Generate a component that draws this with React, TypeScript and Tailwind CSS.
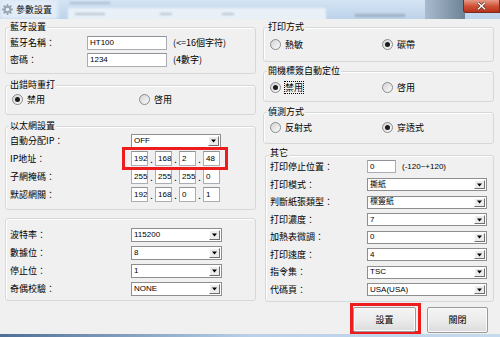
import React from "react";

const CJK = "font-['Noto_Sans_CJK_TC','Noto_Sans_CJK_SC',sans-serif]";
const LAT = "font-['Liberation_Sans','Noto_Sans_CJK_TC',sans-serif]";

function GroupBox({ title, className = "", titleTop = "-top-[6px]", children }: { title?: string; className?: string; titleTop?: string; children?: React.ReactNode }) {
  return (
    <div className={`relative rounded-[3px] border border-[#d5d8db] shadow-[inset_1px_1px_0_#fff] ${className}`}>
      {title && (
        <span className={`absolute left-[3px] bg-[#f0f0f0] px-[1px] text-[9px] leading-[10px] text-black ${titleTop}`}>
          {title}
        </span>
      )}
      {children}
    </div>
  );
}

function Radio({ label, checked, focus, className = "" }: { label: string; checked?: boolean; focus?: boolean; className?: string }) {
  return (
    <div className={`flex items-center gap-[4px] ${className}`}>
      <span className="flex h-[11px] w-[11px] items-center justify-center rounded-full border border-[#8b8b8b] bg-gradient-to-br from-[#d4d4d4] to-[#fbfbfb]">
        {checked && <span className="h-[5px] w-[5px] rounded-full bg-[#1c1c1c]" />}
      </span>
      <span className={`text-[9px] leading-[11px] ${focus ? "outline outline-1 outline-dotted outline-black" : ""}`}>{label}</span>
    </div>
  );
}

function TextBox({ value, className = "" }: { value: string; className?: string }) {
  return (
    <div className={`flex items-center border border-[#abadb3] border-t-[#8f9399] bg-white pl-[2px] text-[8px] leading-none ${LAT} ${className}`}>
      {value}
    </div>
  );
}

function Combo({ value, className = "" }: { value: string; className?: string }) {
  return (
    <div className={`flex items-stretch border border-[#8e8e8e] bg-white ${className}`}>
      <span className={`flex flex-1 items-center pl-[2px] text-[8px] leading-none ${LAT}`}>{value}</span>
      <span className="m-[1px] flex w-[11px] items-center justify-center border border-t-white border-l-white border-r-[#6f6f6f] border-b-[#6f6f6f] bg-[#ececec]">
        <svg width="5" height="4" viewBox="0 0 5 4">
          <path d="M0 0.5h5L2.5 3.5z" fill="#000" />
        </svg>
      </span>
    </div>
  );
}

function IpBox({ parts }: { parts: string[] }) {
  return (
    <div className="flex items-stretch">
      {parts.map((p, i) => (
        <React.Fragment key={i}>
          {i > 0 && <span className="flex w-[7px] items-end justify-center pb-[2px] text-[9px] leading-[9px]">.</span>}
          <TextBox value={p} className="h-[15px] w-[17px]" />
        </React.Fragment>
      ))}
    </div>
  );
}

function Button({ label, className = "" }: { label: string; className?: string }) {
  return (
    <div className={`flex items-center justify-center rounded-[2px] border border-[#9a9a9a] bg-gradient-to-b from-[#f4f4f4] via-[#ececec] to-[#dcdcdc] text-[9px] shadow-[inset_0_0_0_1px_#fafafa] ${className}`}>
      {label}
    </div>
  );
}

export default function App() {
  return (
    <div className={`h-[337px] w-[500px] overflow-hidden bg-[#f0f0f0] text-black ${CJK}`}>
      {/* title bar */}
      <div className="relative h-[19px] overflow-hidden bg-gradient-to-b from-[#d4e4f4] to-[#bdd3ea]">
        <div className="absolute left-[68px] top-[8px] h-[12px] w-[258px] bg-[#e9f0f7] blur-[1px]" />
        <div className="absolute left-[75px] top-[13px] h-[2px] w-[30px] bg-[#b8c4d0] blur-[1px]" />
        <div className="absolute left-[160px] top-[13px] h-[2px] w-[12px] bg-[#b8c4d0] blur-[1px]" />
        <div className="absolute left-[222px] top-[13px] h-[2px] w-[12px] bg-[#b8c4d0] blur-[1px]" />
        <div className="absolute left-[70px] top-[2px] h-[2px] w-[40px] bg-[#aabbd0] blur-[1px]" />
        <div className="absolute left-[355px] top-[14px] h-[3px] w-[50px] bg-[#9fb0c4] blur-[1px]" />
        <div className="absolute left-[425px] top-0 h-full w-[40px] bg-gradient-to-r from-[#a9bccf] to-[#6e8296]" />
        <div className="absolute left-0 top-0 h-full w-[58px] bg-[#e3edf8] blur-[2px]" />
        <div className="relative flex h-full items-center pl-[2px]">
          <svg width="11" height="11" viewBox="0 0 12 12">
            <g fill="#9aa6b4">
              <circle cx="6" cy="6" r="4.2" />
              <rect x="5" y="0" width="2" height="12" rx="0.6" />
              <rect x="0" y="5" width="12" height="2" rx="0.6" />
              <rect x="5" y="0" width="2" height="12" rx="0.6" transform="rotate(45 6 6)" />
              <rect x="5" y="0" width="2" height="12" rx="0.6" transform="rotate(-45 6 6)" />
            </g>
            <circle cx="6" cy="6" r="2" fill="#e8eef5" />
          </svg>
          <span className="ml-[3px] text-[9px] leading-none text-[#111]">參數設置</span>
        </div>
        <div className="absolute right-0 top-0 flex h-[13px] w-[37px] items-center justify-center rounded-bl-[3px] border border-t-0 border-[#7a2c1e] bg-gradient-to-b from-[#e49a88] via-[#cf5236] to-[#b8301a]">
          <svg width="9" height="8" viewBox="0 0 9 8">
            <path d="M1 0.8L8 7.2M8 0.8L1 7.2" stroke="#4a2a24" strokeWidth="2.6" />
            <path d="M1 0.8L8 7.2M8 0.8L1 7.2" stroke="#fff" strokeWidth="1.5" />
          </svg>
        </div>
      </div>

      {/* client area */}
      <div className="flex h-[315px] gap-[7px] pl-[5px]">
        {/* left column */}
        <div className="flex w-[251px] flex-col pt-[8px]">
          <GroupBox title="藍牙設置" className="h-[47px] pl-[4px] pt-[8px]">
            <div className="flex flex-col gap-[3px]">
              <div className="flex h-[14px] items-center">
                <span className="w-[77px] text-[9px]">藍牙名稱：</span>
                <TextBox value="HT100" className="h-[14px] w-[80px]" />
                <span className="ml-[6px] text-[9px]">(&lt;=16個字符)</span>
              </div>
              <div className="flex h-[14px] items-center">
                <span className="w-[77px] text-[9px]">密碼：</span>
                <TextBox value="1234" className="h-[14px] w-[80px]" />
                <span className="ml-[6px] text-[9px]">(4數字)</span>
              </div>
            </div>
          </GroupBox>

          <GroupBox title="出錯時重打" className="mt-[11px] h-[30px] pl-[6px] pt-[8px]">
            <div className="flex">
              <Radio label="禁用" checked className="w-[127px]" />
              <Radio label="啓用" />
            </div>
          </GroupBox>

          <GroupBox title="以太網設置" className="mt-[11px] h-[84px] pl-[4px] pt-[7px]">
            <div className="flex flex-col gap-[3px]">
              <div className="flex h-[14px] items-center">
                <span className="w-[121px] text-[9px]">自動分配IP：</span>
                <Combo value="OFF" className="h-[14px] w-[90px]" />
              </div>
              <div className="flex items-center">
                <span className="w-[121px] text-[9px]">IP地址：</span>
                <div className="relative">
                  <IpBox parts={["192", "168", "2", "48"]} />
                  <div className="absolute -left-[9px] -top-[4px] h-[23px] w-[106px] border-[3px] border-[#ee1d1d]" />
                </div>
              </div>
              <div className="flex items-center">
                <span className="w-[121px] text-[9px]">子網掩碼：</span>
                <IpBox parts={["255", "255", "255", "0"]} />
              </div>
              <div className="flex items-center">
                <span className="w-[121px] text-[9px]">默認網關：</span>
                <IpBox parts={["192", "168", "0", "1"]} />
              </div>
            </div>
          </GroupBox>

          <GroupBox className="mt-[8px] h-[83px] pl-[4px] pt-[9px]">
            <div className="flex flex-col gap-[4px]">
              {[
                ["波特率：", "115200"],
                ["數據位：", "8"],
                ["停止位：", "1"],
                ["奇偶校驗：", "NONE"],
              ].map(([l, v]) => (
                <div key={l} className="flex h-[14px] items-center">
                  <span className="w-[121px] text-[9px]">{l}</span>
                  <Combo value={v} className="h-[14px] w-[91px]" />
                </div>
              ))}
            </div>
          </GroupBox>
        </div>

        {/* right column */}
        <div className="flex w-[231px] flex-col pt-[8px]">
          <GroupBox title="打印方式" className="h-[35px] pl-[6px] pt-[11px]">
            <div className="flex">
              <Radio label="熱敏" className="w-[112px]" />
              <Radio label="碳帶" checked />
            </div>
          </GroupBox>

          <GroupBox title="開機標簽自動定位" className="mt-[9px] h-[31px] pl-[6px] pt-[10px]">
            <div className="flex">
              <Radio label="禁用" checked focus className="w-[112px]" />
              <Radio label="啓用" />
            </div>
          </GroupBox>

          <GroupBox title="偵測方式" className="mt-[10px] h-[32px] pl-[6px] pt-[9px]">
            <div className="flex">
              <Radio label="反射式" className="w-[112px]" />
              <Radio label="穿透式" checked />
            </div>
          </GroupBox>

          <GroupBox title="其它" titleTop="-top-[8px]" className="ml-[2px] mt-[11px] h-[147px] pl-[4px] pt-[4px]">
            <div className="flex h-[13px] items-center">
              <span className="w-[97px] text-[9px] leading-[10px]">打印停止位置：</span>
              <TextBox value="0" className="h-[13px] w-[29px]" />
              <span className={`ml-[6px] text-[8px] leading-[10px] ${LAT}`}>(-120~+120)</span>
            </div>
            <div className="mt-[5px] flex flex-col gap-[4.5px]">
              {[
                ["打印模式：", "撕紙"],
                ["判斷紙張類型：", "標簽紙"],
                ["打印濃度：", "7"],
                ["加熱表微調：", "0"],
                ["打印速度：", "4"],
                ["指令集：", "TSC"],
                ["代碼頁：", "USA(USA)"],
              ].map(([l, v]) => (
                <div key={l} className="flex h-[13px] items-center">
                  <span className="w-[97px] text-[9px]">{l}</span>
                  <Combo value={v} className="h-[13px] w-[120px]" />
                </div>
              ))}
            </div>
          </GroupBox>

          <div className="mt-[1px] flex items-start justify-end gap-[6px] pr-[6px]">
            <div className="h-[31px] w-[71px] border-[3px] border-[#ee1d1d] pt-[1px]">
              <Button label="設置" className="h-[25px] w-[63px]" />
            </div>
            <Button label="關閉" className="mt-[4px] h-[26px] w-[61px]" />
          </div>
        </div>
      </div>

      {/* bottom frame */}
      <div className="h-[3px] bg-gradient-to-r from-[#4f6f95] via-[#b9d0e8] to-[#c6daee]" />
    </div>
  );
}
